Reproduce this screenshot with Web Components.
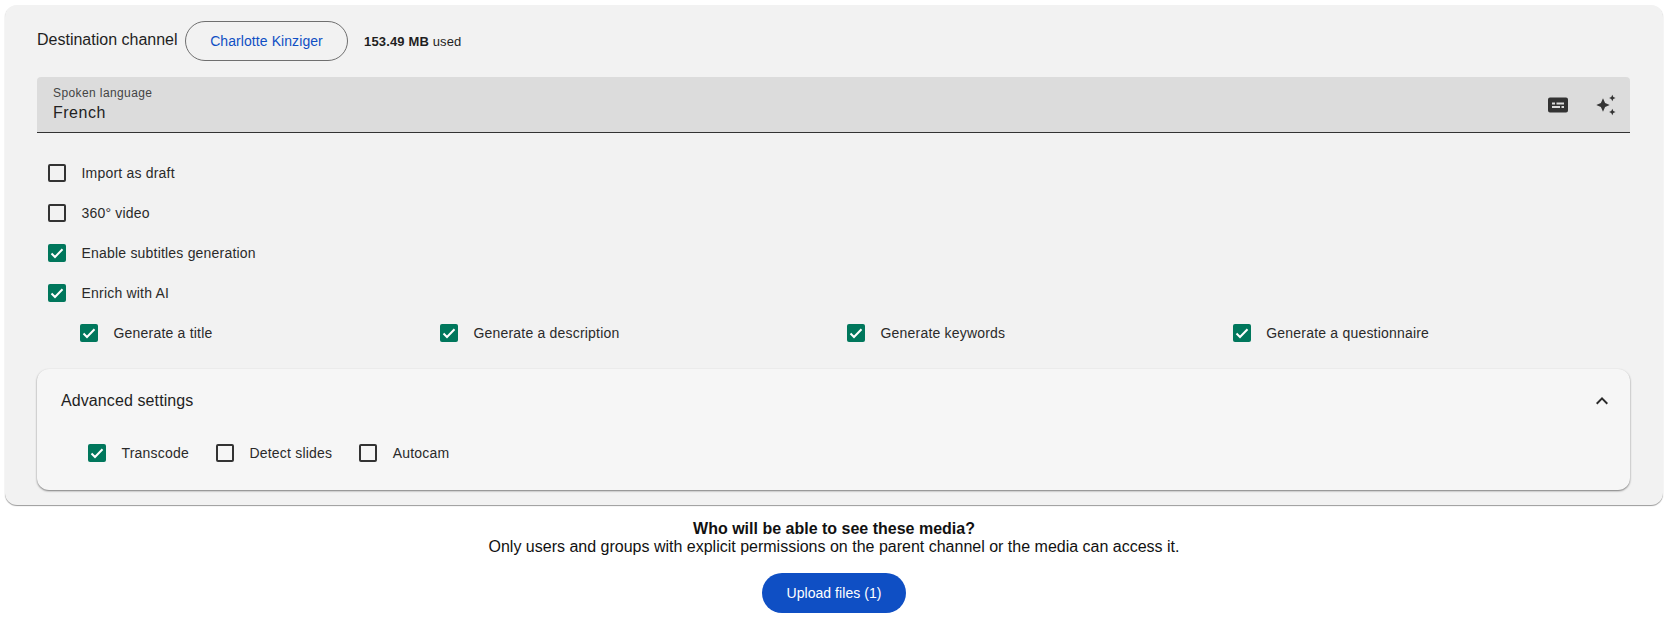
<!DOCTYPE html>
<html lang="en"><head><meta charset="utf-8"><title>Upload</title>
<style>
html,body{margin:0;padding:0;background:#fff}
body{font-family:"Liberation Sans",Arial,sans-serif;color:#1f1f1f;height:619px;overflow:hidden}
</style></head><body>
<upload-page>
  <settings-panel>
    <channel-row slot="top" name="Charlotte Kinziger" used="153.49 MB"></channel-row>
    <select-field label="Spoken language" value="French"></select-field>
    <check-list>
      <check-box label="Import as draft"></check-box>
      <check-box label="360° video"></check-box>
      <check-box label="Enable subtitles generation" checked></check-box>
      <check-box label="Enrich with AI" checked></check-box>
      <check-row>
        <check-box label="Generate a title" checked></check-box>
        <check-box label="Generate a description" checked></check-box>
        <check-box label="Generate keywords" checked></check-box>
        <check-box label="Generate a questionnaire" checked></check-box>
      </check-row>
    </check-list>
    <advanced-box title-text="Advanced settings">
      <check-box label="Transcode" checked></check-box>
      <check-box label="Detect slides"></check-box>
      <check-box label="Autocam"></check-box>
    </advanced-box>
  </settings-panel>
  <upload-footer></upload-footer>
</upload-page>
<script>
const def=(name,html)=>customElements.define(name,class extends HTMLElement{
  connectedCallback(){ if(this.shadowRoot) return;
    const r=this.attachShadow({mode:'open'}); r.innerHTML=typeof html==='function'?html(this):html; }
});
const esc=s=>(s||'').replace(/&/g,'&amp;').replace(/</g,'&lt;');
def('upload-page',`<style>:host{display:block;padding:5px 5px 0 5px}</style><slot></slot>`);
def('settings-panel',`<style>:host{display:block;box-sizing:border-box;height:500px;background:#f2f2f2;border-radius:12px;padding:16px 33px 0 32px;box-shadow:0 1px 1px rgba(0,0,0,.4)}
</style><slot name="top"></slot><slot></slot>`);
def('channel-row',h=>`<style>:host{display:flex;align-items:center;height:40px;color:#1f1f1f}
.t{font-size:16px;margin-top:-2px;width:148px}
.p{box-sizing:border-box;width:163px;height:40px;border:1px solid #6f6f6f;border-radius:20px;display:flex;align-items:center;justify-content:center;color:#0f4fc4;font-size:14px;letter-spacing:.08px}
.u{margin-left:16px;font-size:13px;letter-spacing:.15px}
b{font-weight:700}</style><span class="t">Destination channel</span><span class="p">${esc(h.getAttribute('name'))}</span><span class="u"><b>${esc(h.getAttribute('used'))}</b> used</span>`);
def('select-field',h=>`<style>:host{display:flex;box-sizing:border-box;height:56px;margin-top:16px;background:#dcdcdc;border-radius:4px 4px 0 0;border-bottom:1px solid #333;padding:0 11px 0 16px;align-items:center}
.c{flex:1;display:flex;flex-direction:column;padding-top:1px}
.l{font-size:12px;line-height:14px;letter-spacing:.4px;color:#444}
.v{font-size:16px;line-height:23px;letter-spacing:.5px;color:#222;margin-top:1px}
.i{display:flex;gap:25px;color:#333}
svg{width:24px;height:24px;display:block;fill:#333}</style>
<div class="c"><span class="l">${esc(h.getAttribute('label'))}</span><span class="v">${esc(h.getAttribute('value'))}</span></div>
<div class="i"><svg viewBox="0 0 24 24"><path fill-rule="evenodd" d="M4 4.500h16a2 2 0 0 1 2 2v11a2 2 0 0 1-2 2H4a2 2 0 0 1-2-2v-11a2 2 0 0 1 2-2zM6 9.500v2h3v-2zM10.500 9.500v2h7.500v-2zM6 13v2h8v-2zM15.500 13v2h2.500v-2z"/></svg>
<svg viewBox="0 0 24 24"><path d="M8 5.300l2.100 4.600 4.600 2.100-4.600 2.100-2.100 4.600-2.100-4.600L1.300 12l4.600-2.100zM17.300 1.800l1 2.200 2.200 1-2.200 1-1 2.200-1-2.200-2.200-1 2.200-1zM17.300 15.800l1 2.200 2.200 1-2.200 1-1 2.200-1-2.200-2.200-1 2.200-1z"/></svg></div>`);
def('check-list',`<style>:host{display:flex;flex-direction:column;padding:20px 0 0 11px}::slotted(check-box){height:40px}</style><slot></slot>`);
def('check-row',`<style>:host{display:flex;height:40px;padding-left:32px;gap:227.500px}</style><slot></slot>`);
def('check-box',h=>{const c=h.hasAttribute('checked');return `<style>:host{display:inline-flex;align-items:center;height:40px;font-size:14px;letter-spacing:.2px;color:#2a2a2a;white-space:nowrap}
.b{box-sizing:border-box;width:18px;height:18px;border-radius:2px;border:2px solid #333;margin-right:15.500px;flex:none;display:flex}
.b.c{background:#00775c;border:0}
svg{width:18px;height:18px;display:block}</style>
<span class="b ${c?'c':''}">${c?'<svg viewBox="0 0 18 18"><path d="M3.500 9.500l3.500 3.500L14.500 5.200" fill="none" stroke="#fff" stroke-width="2"/></svg>':''}</span><span>${esc(h.getAttribute('label'))}</span>`});
def('advanced-box',h=>`<style>:host{display:block;box-sizing:border-box;height:121px;margin-top:16px;background:#f6f6f6;border-radius:12px;box-shadow:0 1px 2px rgba(0,0,0,.5)}
.h{display:flex;align-items:center;justify-content:space-between;height:64px;padding:0 16px 0 24px;font-size:16px;letter-spacing:.1px;color:#1f1f1f}
svg{width:24px;height:24px;display:block;fill:#2a2a2a}
.b{display:flex;gap:27px;padding:0 0 0 51px}</style>
<div class="h"><span>${esc(h.getAttribute('title-text'))}</span><svg viewBox="0 0 24 24"><path d="M12 8l-6 6 1.410 1.410L12 10.830l4.590 4.580L18 14z"/></svg></div>
<div class="b"><slot></slot></div>`);
def('upload-footer',`<style>:host{display:flex;flex-direction:column;align-items:center;font-size:16px;line-height:18px;color:#111;padding-top:15px}
b{font-weight:700}
button{all:unset;box-sizing:border-box;width:144px;height:40px;margin-top:17px;border-radius:20px;background:#0f4fc4;color:#fff;font:14px "Liberation Sans",Arial,sans-serif;text-align:center;letter-spacing:.05px;margin-left:0}</style>
<b>Who will be able to see these media?</b><span>Only users and groups with explicit permissions on the parent channel or the media can access it.</span><button>Upload files (1)</button>`);
</script></body></html>
